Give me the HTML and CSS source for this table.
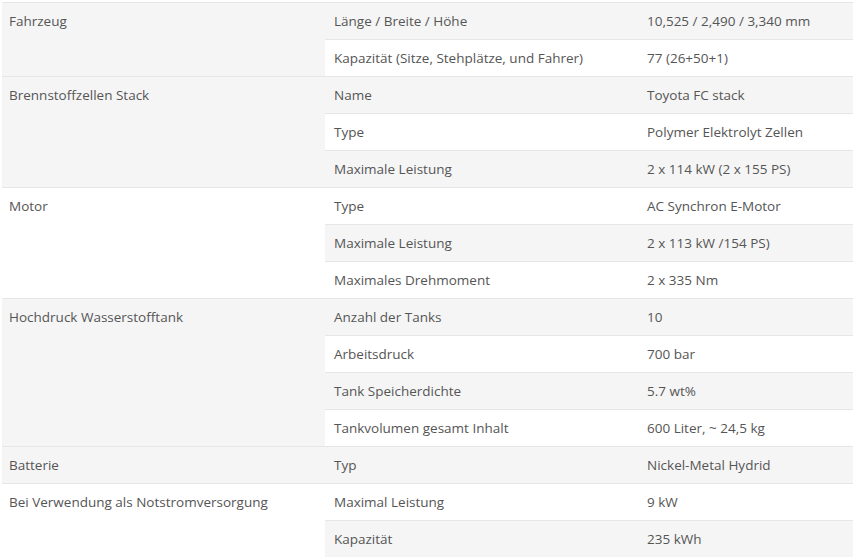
FILE: index.html
```html
<!DOCTYPE html>
<html lang="de">
<head>
<meta charset="utf-8">
<link rel="stylesheet" href="styles.css">
</head>
<body>
<div class="wrap">
<table class="spec">
<colgroup><col class="c1"><col class="c2"><col class="c3"></colgroup>
<tbody>
<tr><td class="g" rowspan="2">Fahrzeug</td><td>Länge / Breite / Höhe</td><td>10,525 / 2,490 / 3,340 mm</td></tr>
<tr><td>Kapazität (Sitze, Stehplätze, und Fahrer)</td><td>77 (26+50+1)</td></tr>
<tr><td class="g" rowspan="3">Brennstoffzellen Stack</td><td>Name</td><td>Toyota FC stack</td></tr>
<tr><td>Type</td><td>Polymer Elektrolyt Zellen</td></tr>
<tr><td>Maximale Leistung</td><td>2 x 114 kW (2 x 155 PS)</td></tr>
<tr><td class="g" rowspan="3">Motor</td><td>Type</td><td>AC Synchron E-Motor</td></tr>
<tr><td>Maximale Leistung</td><td>2 x 113 kW /154 PS)</td></tr>
<tr><td>Maximales Drehmoment</td><td>2 x 335 Nm</td></tr>
<tr><td class="g" rowspan="4">Hochdruck Wasserstofftank</td><td>Anzahl der Tanks</td><td>10</td></tr>
<tr><td>Arbeitsdruck</td><td>700 bar</td></tr>
<tr><td>Tank Speicherdichte</td><td>5.7 wt%</td></tr>
<tr><td>Tankvolumen gesamt Inhalt</td><td>600 Liter, ~ 24,5 kg</td></tr>
<tr><td class="g">Batterie</td><td>Typ</td><td>Nickel-Metal Hydrid</td></tr>
<tr><td class="g" rowspan="2">Bei Verwendung als Notstromversorgung</td><td>Maximal Leistung</td><td>9 kW</td></tr>
<tr><td>Kapazität</td><td>235 kWh</td></tr>
</tbody>
</table>
</div>
</body>
</html>
```

FILE: styles.css
```css
html, body {
  margin: 0;
  padding: 0;
  background: #fff;
}
.wrap {
  padding: 2px 1px 0 2px;
}
.spec {
  width: 851px;
  border-collapse: collapse;
  table-layout: fixed;
  font-family: "Open Sans", "DejaVu Sans", sans-serif;
  font-size: 13.5px;
  color: #555;
}
.c1 { width: 323px; }
.c2 { width: 313px; }
.c3 { width: 215px; }
.spec td {
  padding: 8px 9px;
  line-height: 20px;
  vertical-align: top;
  border-top: 1px solid #e6e6e6;
  text-align: left;
  white-space: nowrap;
}
.spec td.g {
  padding-left: 7px;
}
.spec tr:nth-child(odd) td {
  background: #f5f5f5;
}
.spec tr:nth-child(even) td {
  background: #fff;
}
```
